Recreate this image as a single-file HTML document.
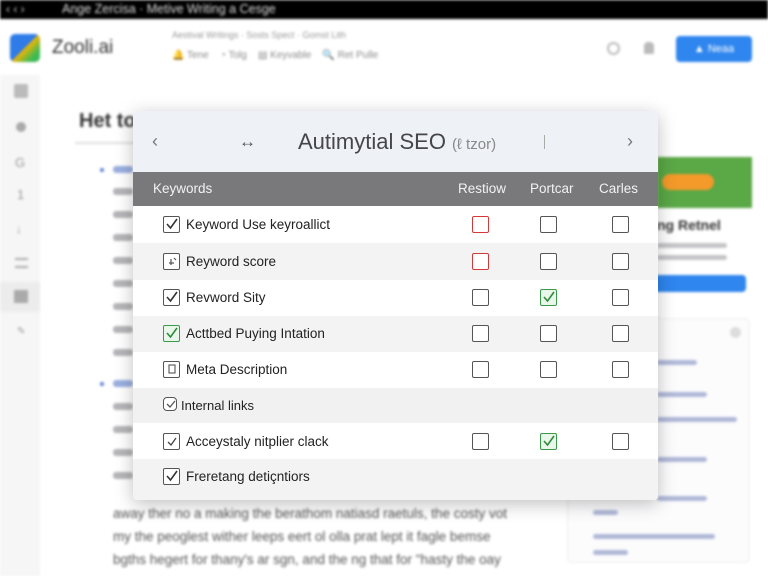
<!DOCTYPE html>
<html><head><meta charset="utf-8"><style>
*{margin:0;padding:0;box-sizing:border-box}
html,body{width:768px;height:576px;overflow:hidden}
body{background:#fff;font-family:"Liberation Sans",sans-serif;position:relative}
.bg{position:absolute;left:0;top:0;width:768px;height:576px;filter:blur(1.2px);overflow:hidden}
.abs{position:absolute}
.line{position:absolute;height:7px;background:#b5b5b8;border-radius:3px}
.modal{position:absolute;left:133px;top:111px;width:525px;height:389px;background:#fff;border-radius:4px;box-shadow:0 4px 18px rgba(0,0,0,.25);overflow:hidden}
.mh{height:61px;background:#eef1f6;position:relative;color:#555}
.th{position:absolute;top:61px;left:0;right:0;height:34px;background:#79797b;color:#f2f2f2;font-size:13.5px}
.row{position:absolute;left:0;right:0;font-size:13.5px;color:#222}
.cb{position:absolute;width:17px;height:17px;border:1.6px solid #555;border-radius:2px;background:#fff}
.cb.r{border-color:#d23a3a}
.cb.g{border-color:#3a9a4a;background:#e9f6ea}
.cb svg{position:absolute;left:1px;top:0}
</style></head><body>
<div class="bg">
 <div class="abs" style="left:0;top:0;width:768px;height:19px;background:#000"></div>
 <div class="abs" style="left:6px;top:2px;font-size:12px;color:#ccc">‹ ‹ ›</div>
 <div class="abs" style="left:62px;top:2px;font-size:12.5px;color:#ddd">Ange Zercisa · Metive Writing a Cesge</div>
 <div class="abs" style="left:10px;top:34px;width:30px;height:28px;border-radius:5px;background:linear-gradient(135deg,#2f7be8 50%,#f4b400 50%,#3cba54 80%)"></div>
 <div class="abs" style="left:52px;top:37px;font-size:19px;color:#333">Zooli.ai</div>
 <div class="abs" style="left:172px;top:30px;font-size:9px;color:#999">Aestival Writings · Sosts Spect · Gomst Lith</div>
 <div class="abs" style="left:172px;top:50px;font-size:10px;color:#8a8a8a">🔔 Tene &nbsp;&nbsp; ◔ Tolg &nbsp;&nbsp; ▤ Keyvable &nbsp;&nbsp; <span style="color:#3a7bd5">🔍</span> Ret Pulle</div>
 <div class="abs" style="left:607px;top:42px;width:13px;height:13px;border:2px solid #bbb;border-radius:50%"></div>
 <div class="abs" style="left:644px;top:42px;width:10px;height:12px;background:#bbb;border-radius:4px 4px 1px 1px"></div>
 <div class="abs" style="left:676px;top:36px;width:76px;height:26px;background:#2f86ee;border-radius:4px;color:#fff;font-size:11px;text-align:center;line-height:26px">▲ Neaa</div>
 <div class="abs" style="left:0;top:75px;width:40px;height:501px;background:#f6f6f6"></div>
 <div class="abs" style="left:14px;top:84px;width:14px;height:14px;background:#bbb;border-radius:2px"></div>
 <div class="abs" style="left:16px;top:122px;width:10px;height:10px;background:#aaa;border-radius:50%"></div>
 <div class="abs" style="left:15px;top:155px;font-size:13px;color:#999">G</div>
 <div class="abs" style="left:17px;top:187px;font-size:13px;color:#999">1</div>
 <div class="abs" style="left:16px;top:222px;font-size:12px;color:#999">↓</div>
 <div class="abs" style="left:15px;top:258px;width:13px;height:10px;border-top:2px solid #aaa;border-bottom:2px solid #aaa"></div>
 <div class="abs" style="left:0;top:282px;width:40px;height:30px;background:#ececec"></div>
 <div class="abs" style="left:14px;top:290px;width:14px;height:13px;background:#aaa"></div>
 <div class="abs" style="left:17px;top:326px;font-size:10px;color:#999">✎</div>
 <div class="abs" style="left:79px;top:110px;font-size:20px;font-weight:bold;color:#333">Het to</div>
 <div class="abs" style="left:75px;top:142px;width:60px;height:2px;background:#ddd"></div>
 <div class="abs" style="left:100px;top:168px;width:4px;height:4px;background:#5a7ed0;border-radius:50%"></div>
 <div class="line" style="left:113px;top:166px;width:20px;background:#9aafe0"></div>
 <div class="line" style="left:113px;top:188px;width:20px"></div>
 <div class="line" style="left:113px;top:211px;width:20px"></div>
 <div class="line" style="left:113px;top:234px;width:20px"></div>
 <div class="line" style="left:113px;top:257px;width:20px"></div>
 <div class="line" style="left:113px;top:280px;width:20px"></div>
 <div class="line" style="left:113px;top:303px;width:20px"></div>
 <div class="line" style="left:113px;top:326px;width:20px"></div>
 <div class="line" style="left:113px;top:349px;width:20px"></div>
 <div class="abs" style="left:100px;top:382px;width:4px;height:4px;background:#5a7ed0;border-radius:50%"></div>
 <div class="line" style="left:113px;top:380px;width:20px;background:#9aafe0"></div>
 <div class="line" style="left:113px;top:403px;width:20px"></div>
 <div class="line" style="left:113px;top:426px;width:20px"></div>
 <div class="line" style="left:113px;top:449px;width:20px"></div>
 <div class="line" style="left:113px;top:472px;width:20px"></div>
 <div class="abs" style="left:113px;top:502px;font-size:13.5px;color:#555;line-height:23px;width:440px;white-space:nowrap">
  away ther no a making the berathom natiasd raetuls, the costy vot<br>my the peoglest wither leeps eert ol olla prat lept it fagle bemse<br>bgths hegert for thany's ar sgn, and the ng that for "hasty the oay<br>sor with vilim a vitin os hutthtavos ovs est 22L the o reses
 </div>
 <div class="abs" style="left:657px;top:157px;width:95px;height:51px;background:#5aa846"></div>
 <div class="abs" style="left:662px;top:174px;width:52px;height:16px;background:#f39a2a;border-radius:8px"></div>
 <div class="abs" style="left:657px;top:217px;font-size:14px;font-weight:bold;color:#333">ng Retnel</div>
 <div class="line" style="left:657px;top:243px;width:70px;height:5px;background:#c5c5c8"></div>
 <div class="line" style="left:657px;top:255px;width:70px;height:5px;background:#c5c5c8"></div>
 <div class="abs" style="left:600px;top:275px;width:146px;height:17px;background:#2f86ee;border-radius:4px"></div>
 <div class="abs" style="left:567px;top:318px;width:183px;height:245px;border:1px solid #eee;border-radius:6px;background:#fcfcfd"></div>
 <div class="abs" style="left:730px;top:327px;width:11px;height:11px;border-radius:50%;background:#ddd"></div>
 <div class="line" style="left:657px;top:360px;width:40px;height:5px;background:#b0b8d8"></div>
 <div class="line" style="left:657px;top:392px;width:50px;height:5px;background:#b0b8d8"></div>
 <div class="line" style="left:657px;top:417px;width:80px;height:5px;background:#b0b8d8"></div>
 <div class="line" style="left:657px;top:457px;width:50px;height:5px;background:#b0b8d8"></div>
 <div class="line" style="left:657px;top:496px;width:50px;height:5px;background:#b0b8d8"></div>
 <div class="line" style="left:593px;top:510px;width:25px;height:5px;background:#b0b8d8"></div>
 <div class="line" style="left:593px;top:534px;width:122px;height:5px;background:#b0b8d8"></div>
 <div class="line" style="left:593px;top:550px;width:35px;height:5px;background:#b0b8d8"></div>
</div>

<div class="modal">
 <div class="mh">
  <div class="abs" style="left:19px;top:20px;font-size:18px;color:#777">‹</div>
  <div class="abs" style="left:106px;top:21px;font-size:17px;color:#555">↔</div>
  <div class="abs" style="left:165px;top:18px;font-size:22px;color:#45454b">Autimytial SEO <span style="font-size:15px;color:#888">(ℓ tzor)</span></div>
  <div class="abs" style="left:411px;top:24px;width:1px;height:14px;background:#aaa"></div>
  <div class="abs" style="left:494px;top:20px;font-size:18px;color:#777">›</div>
 </div>
 <div class="th">
  <div class="abs" style="left:20px;top:9px">Keywords</div>
  <div class="abs" style="left:325px;top:9px">Restiow</div>
  <div class="abs" style="left:397px;top:9px">Portcar</div>
  <div class="abs" style="left:466px;top:9px">Carles</div>
 </div>
 <div class="row" style="top:95px;height:37px;background:#fff"><div class="cb" style="left:30px;top:10px"><svg width="14" height="14"><path d="M2 7l3.5 4L12 2" stroke="#333" stroke-width="1.6" fill="none"/></svg></div><div class="abs" style="left:53px;top:11px">Keyword Use keyroallict</div><div class="cb r" style="left:339px;top:10px"></div><div class="cb" style="left:407px;top:10px"></div><div class="cb" style="left:479px;top:10px"></div></div>
 <div class="row" style="top:132px;height:37px;background:#f3f3f3"><div class="cb" style="left:30px;top:10px"><svg width="14" height="14"><path d="M4 9h5M6 5v6M9 4l2 2" stroke="#555" stroke-width="1.2" fill="none"/></svg></div><div class="abs" style="left:53px;top:11px">Reyword score</div><div class="cb r" style="left:339px;top:10px"></div><div class="cb" style="left:407px;top:10px"></div><div class="cb" style="left:479px;top:10px"></div></div>
 <div class="row" style="top:169px;height:36px;background:#fff"><div class="cb" style="left:30px;top:9px"><svg width="14" height="14"><path d="M2 7l3.5 4L12 2" stroke="#333" stroke-width="1.6" fill="none"/></svg></div><div class="abs" style="left:53px;top:10px">Revword Sity</div><div class="cb" style="left:339px;top:9px"></div><div class="cb g" style="left:407px;top:9px"><svg width="14" height="14"><path d="M2 7l3.5 4L12 2" stroke="#2e8b3a" stroke-width="1.6" fill="none"/></svg></div><div class="cb" style="left:479px;top:9px"></div></div>
 <div class="row" style="top:205px;height:36px;background:#f3f3f3"><div class="cb g" style="left:30px;top:9px"><svg width="14" height="14"><path d="M2 7l3.5 4L12 2" stroke="#2e8b3a" stroke-width="1.6" fill="none"/></svg></div><div class="abs" style="left:53px;top:10px">Acttbed Puying Intation</div><div class="cb" style="left:339px;top:9px"></div><div class="cb" style="left:407px;top:9px"></div><div class="cb" style="left:479px;top:9px"></div></div>
 <div class="row" style="top:241px;height:36px;background:#fff"><div class="cb" style="left:30px;top:9px"><svg width="14" height="14"><rect x="4" y="3" width="6" height="8" stroke="#555" stroke-width="1.1" fill="none"/></svg></div><div class="abs" style="left:53px;top:10px">Meta Description</div><div class="cb" style="left:339px;top:9px"></div><div class="cb" style="left:407px;top:9px"></div><div class="cb" style="left:479px;top:9px"></div></div>
 <div class="row" style="top:277px;height:35px;background:#f1f1f1"><div class="cb" style="left:30px;top:9px;width:14px;height:14px;border-radius:4px"><svg width="12" height="12"><path d="M2 6l3 3 5-6" stroke="#555" stroke-width="1.3" fill="none"/></svg></div><div class="abs" style="left:48px;top:10px;font-size:13px">Internal links</div></div>
 <div class="row" style="top:312px;height:36px;background:#fff"><div class="cb" style="left:30px;top:10px"><svg width="14" height="14"><path d="M3 8l3 3 5-7" stroke="#444" stroke-width="1.3" fill="none"/></svg></div><div class="abs" style="left:53px;top:11px">Acceystaly nitplier clack</div><div class="cb" style="left:339px;top:10px"></div><div class="cb g" style="left:407px;top:10px"><svg width="14" height="14"><path d="M2 7l3.5 4L12 2" stroke="#2e8b3a" stroke-width="1.6" fill="none"/></svg></div><div class="cb" style="left:479px;top:10px"></div></div>
 <div class="row" style="top:348px;height:41px;background:#f3f3f3"><div class="cb" style="left:30px;top:9px"><svg width="14" height="14"><path d="M2 7l3.5 4L12 2" stroke="#333" stroke-width="1.6" fill="none"/></svg></div><div class="abs" style="left:53px;top:10px">Freretang detiçntiors</div></div>
</div>
</body></html>
